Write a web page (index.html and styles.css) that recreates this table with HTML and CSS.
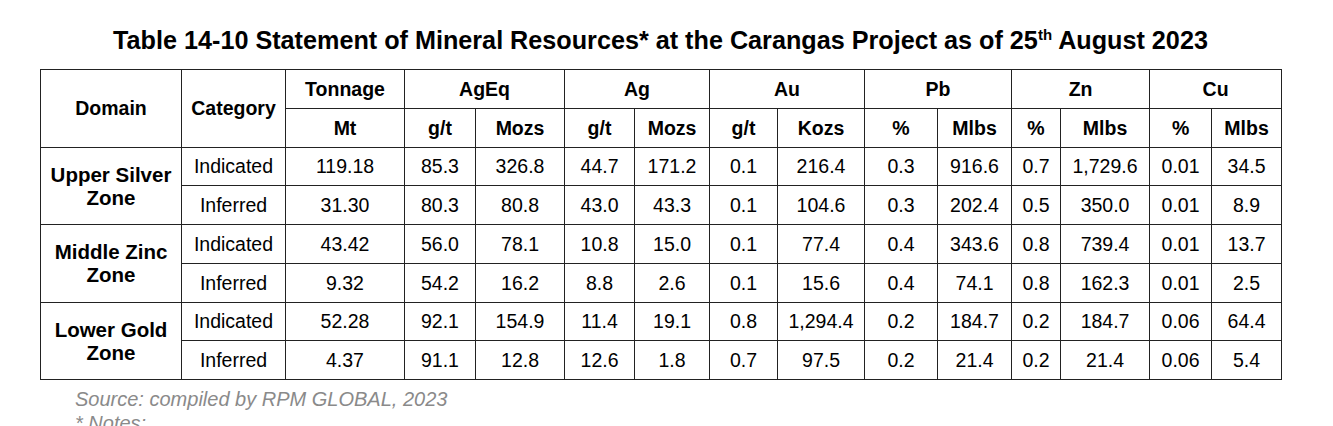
FILE: index.html
```html
<!DOCTYPE html>
<html lang="en">
<head>
<meta charset="utf-8">
<title>Table 14-10 Statement of Mineral Resources</title>
<link rel="stylesheet" href="styles.css">
</head>
<body>
<div class="page">
  <h1 class="title">Table 14-10 Statement of Mineral Resources* at the Carangas Project as of 25<sup>th</sup> August 2023</h1>
  <table class="res">
    <colgroup>
      <col class="c-dom"><col class="c-cat"><col class="c-ton">
      <col class="c-a1"><col class="c-a2">
      <col class="c-b1"><col class="c-b2">
      <col class="c-c1"><col class="c-c2">
      <col class="c-d1"><col class="c-d2">
      <col class="c-e1"><col class="c-e2">
      <col class="c-f1"><col class="c-f2">
    </colgroup>
    <thead>
      <tr>
        <th rowspan="2">Domain</th>
        <th rowspan="2">Category</th>
        <th>Tonnage</th>
        <th colspan="2">AgEq</th>
        <th colspan="2">Ag</th>
        <th colspan="2">Au</th>
        <th colspan="2">Pb</th>
        <th colspan="2">Zn</th>
        <th colspan="2">Cu</th>
      </tr>
      <tr>
        <th>Mt</th>
        <th>g/t</th><th>Mozs</th>
        <th>g/t</th><th>Mozs</th>
        <th>g/t</th><th>Kozs</th>
        <th>%</th><th>Mlbs</th>
        <th>%</th><th>Mlbs</th>
        <th>%</th><th>Mlbs</th>
      </tr>
    </thead>
    <tbody>
      <tr>
        <th class="dom" rowspan="2">Upper Silver<br>Zone</th>
        <td>Indicated</td><td>119.18</td><td>85.3</td><td>326.8</td><td>44.7</td><td>171.2</td><td>0.1</td><td>216.4</td><td>0.3</td><td>916.6</td><td>0.7</td><td>1,729.6</td><td>0.01</td><td>34.5</td>
      </tr>
      <tr>
        <td>Inferred</td><td>31.30</td><td>80.3</td><td>80.8</td><td>43.0</td><td>43.3</td><td>0.1</td><td>104.6</td><td>0.3</td><td>202.4</td><td>0.5</td><td>350.0</td><td>0.01</td><td>8.9</td>
      </tr>
      <tr>
        <th class="dom" rowspan="2">Middle Zinc<br>Zone</th>
        <td>Indicated</td><td>43.42</td><td>56.0</td><td>78.1</td><td>10.8</td><td>15.0</td><td>0.1</td><td>77.4</td><td>0.4</td><td>343.6</td><td>0.8</td><td>739.4</td><td>0.01</td><td>13.7</td>
      </tr>
      <tr>
        <td>Inferred</td><td>9.32</td><td>54.2</td><td>16.2</td><td>8.8</td><td>2.6</td><td>0.1</td><td>15.6</td><td>0.4</td><td>74.1</td><td>0.8</td><td>162.3</td><td>0.01</td><td>2.5</td>
      </tr>
      <tr>
        <th class="dom" rowspan="2">Lower Gold<br>Zone</th>
        <td>Indicated</td><td>52.28</td><td>92.1</td><td>154.9</td><td>11.4</td><td>19.1</td><td>0.8</td><td>1,294.4</td><td>0.2</td><td>184.7</td><td>0.2</td><td>184.7</td><td>0.06</td><td>64.4</td>
      </tr>
      <tr>
        <td>Inferred</td><td>4.37</td><td>91.1</td><td>12.8</td><td>12.6</td><td>1.8</td><td>0.7</td><td>97.5</td><td>0.2</td><td>21.4</td><td>0.2</td><td>21.4</td><td>0.06</td><td>5.4</td>
      </tr>
    </tbody>
  </table>
  <p class="source">Source: compiled by RPM GLOBAL, 2023</p>
  <p class="notes">* Notes:</p>
</div>
</body>
</html>
```
FILE: styles.css
```css
html, body {
  margin: 0;
  padding: 0;
  background: #ffffff;
}

body {
  font-family: "Liberation Sans", Arial, sans-serif;
  color: #000000;
}

.page {
  width: 1241px;
  padding: 0 0 0 40px;
}

.title {
  margin: 0;
  height: 69px;
  box-sizing: border-box;
  padding-top: 27px;
  font-size: 25.2px;
  line-height: 26px;
  font-weight: bold;
  text-align: center;
}

.title sup {
  font-size: 15px;
  line-height: 0;
  vertical-align: 9px;
}

.res {
  width: 1241px;
  table-layout: fixed;
  border-collapse: collapse;
  font-size: 19.5px;
}

.res th,
.res td {
  border: 1px solid #222222;
  height: 37.75px;
  padding: 0;
  text-align: center;
  vertical-align: middle;
  line-height: 22px;
  white-space: nowrap;
}

.res th {
  font-weight: bold;
}

.res td {
  font-weight: normal;
}

.res th.dom {
  font-size: 20.5px;
  line-height: 23px;
}

.c-dom { width: 141px; }
.c-cat { width: 104px; }
.c-ton { width: 119px; }
.c-a1 { width: 71px; }
.c-a2 { width: 89px; }
.c-b1 { width: 70px; }
.c-b2 { width: 75px; }
.c-c1 { width: 68px; }
.c-c2 { width: 87px; }
.c-d1 { width: 73px; }
.c-d2 { width: 74px; }
.c-e1 { width: 49px; }
.c-e2 { width: 89px; }
.c-f1 { width: 62px; }
.c-f2 { width: 70px; }

.source {
  margin: 7px 0 0 35px;
  font-size: 20px;
  line-height: 24px;
  font-style: italic;
  color: #8a8a8a;
}

.notes {
  margin: 0 0 0 35px;
  font-size: 20px;
  line-height: 24px;
  font-style: italic;
  color: #8a8a8a;
}
```
